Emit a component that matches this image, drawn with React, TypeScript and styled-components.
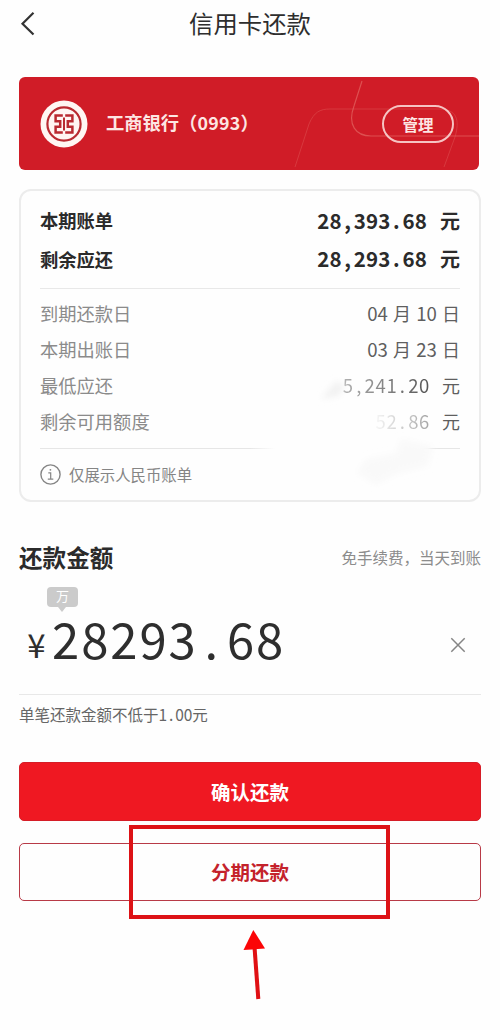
import React from "react";
import styled, { createGlobalStyle } from "styled-components";

const Global = createGlobalStyle`
  *, *::before, *::after { box-sizing: border-box; }
  body {
    margin: 0;
    background: #fefefe;
    color: #2e2e2e;
    font-family: "Noto Sans CJK SC", sans-serif;
  }
  button { font: inherit; padding: 0; margin: 0; background: none; border: 0; color: inherit; }
  svg { display: block; flex: none; }
`;

const Page = styled.main`
  width: 500px;
  height: 1030px;
  padding: 0 19px;
  display: flex;
  flex-direction: column;
  overflow: hidden;
`;

const Header = styled.header`
  height: 47px;
  display: grid;
  grid-template-columns: 60px 1fr 60px;
  align-items: center;
`;

const Title = styled.h1`
  margin: 0;
  padding-bottom: 2px;
  text-align: center;
  font-size: 24.4px;
  font-weight: 400;
  line-height: 45px;
`;

const BankCard = styled.section`
  position: relative;
  margin: 30px 2px 0 0;
  height: 93px;
  padding: 0 25px 0 21px;
  display: flex;
  align-items: center;
  border-radius: 6px;
  background: #d01c27;
  color: #fde6e3;
  overflow: hidden;
`;

const CardLines = styled.svg`
  position: absolute;
  right: 0;
  top: 0;
`;

const BankName = styled.div`
  flex: 1;
  margin-left: 18px;
  padding-bottom: 3px;
  font-size: 18.3px;
  font-weight: 700;
  line-height: 26px;
  white-space: nowrap;
`;

const ManageButton = styled.button`
  position: relative;
  width: 72px;
  height: 38px;
  border: 2px solid #f6c4c3;
  border-radius: 19px;
  font-size: 15.5px;
  font-weight: 700;
  line-height: 32px;
`;

const DigitRun = styled.span<{ $size: number; $spacing: number; $weight: number }>`
  font-size: ${(p) => p.$size}px;
  font-weight: ${(p) => p.$weight};
  letter-spacing: ${(p) => p.$spacing}px;
`;

const Mark = styled.span<{ $width: number }>`
  display: inline-block;
  width: ${(p) => p.$width}px;
  text-align: center;
`;

const BillCard = styled.section`
  position: relative;
  margin-top: 19px;
  height: 313px;
  padding: 10px 19px 0;
  border: 2px solid #ececec;
  border-radius: 12px;
`;

const Row = styled.div<{ $strong?: boolean }>`
  display: flex;
  justify-content: space-between;
  align-items: center;
  height: ${(p) => (p.$strong ? 38.5 : 36.1)}px;
  font-size: 18.3px;
  line-height: 30px;
  font-weight: ${(p) => (p.$strong ? 600 : 400)};
  color: ${(p) => (p.$strong ? "#2b2b2b" : "#8b8b8b")};
  white-space: nowrap;
`;

const Value = styled.span<{ $strong?: boolean }>`
  display: flex;
  align-items: baseline;
  gap: ${(p) => (p.$strong ? 13 : 12)}px;
  font-size: ${(p) => (p.$strong ? 20 : 18)}px;
  color: ${(p) => (p.$strong ? "#2b2b2b" : "#5f5f5f")};
`;

const DateValue = styled(Value)`
  gap: 5.3px;
`;

const Faded = styled.span<{ $from: string; $to: string }>`
  background: linear-gradient(90deg, ${(p) => p.$from}, ${(p) => p.$to});
  background-clip: text;
  -webkit-background-clip: text;
  color: transparent;
`;

const Rule = styled.hr<{ $gap?: string; $erased?: boolean }>`
  border: 0;
  flex: none;
  height: 1px;
  margin: ${(p) => p.$gap ?? "0"};
  background: ${(p) =>
    p.$erased
      ? "linear-gradient(90deg, #e6e6e6 50%, #fefefe 56%, #fefefe 90%, #e6e6e6 93%)"
      : "#e8e8e8"};
`;

const Note = styled.div`
  display: flex;
  align-items: center;
  gap: 8px;
  margin-top: 14px;
  height: 23px;
  font-size: 15.4px;
  color: #858585;
`;

const NoteText = styled.span`
  padding-bottom: 2px;
`;

const Smudge = styled.svg`
  position: absolute;
  left: 270px;
  top: 180px;
`;

const AmountHead = styled.div`
  display: flex;
  justify-content: space-between;
  align-items: center;
  margin-top: 39px;
  height: 32px;
  color: #8c8c8c;
  font-size: 15.5px;
`;

const AmountTitle = styled.h2`
  margin: 0;
  font-size: 23.6px;
  line-height: 32px;
  font-weight: 600;
  color: #2b2b2b;
`;

const UnitTag = styled.div`
  position: relative;
  width: 31px;
  height: 20px;
  margin: 14px 0 0 28px;
  border-radius: 4px;
  background: #cbcbcb;
  color: #fff;
  text-align: center;
  font-size: 13px;
  line-height: 18px;
  &::after {
    content: "";
    position: absolute;
    left: 11px;
    top: 20px;
    border: 4.5px solid transparent;
    border-top: 5px solid #cbcbcb;
    border-bottom: 0;
  }
`;

const AmountRow = styled.div`
  display: flex;
  align-items: center;
  height: 70px;
  margin-top: 3px;
  padding-right: 15px;
`;

const Amount = styled.div`
  flex: 1;
  display: flex;
  align-items: baseline;
  margin: 0 0 7px 2px;
  line-height: 60px;
`;

const Yen = styled.span`
  position: relative;
  top: -1px;
  width: 31px;
  font-size: 33px;
  text-align: center;
`;

const Minimum = styled.p`
  margin: 8px 0 0;
  height: 22px;
  font-size: 15.5px;
  line-height: 22px;
  color: #666;
`;

const Action = styled.button<{ $primary?: boolean }>`
  flex: none;
  width: 462px;
  height: ${(p) => (p.$primary ? 59 : 58)}px;
  margin-top: ${(p) => (p.$primary ? 37 : 22)}px;
  border: 1.5px solid ${(p) => (p.$primary ? "#d51d27" : "#b83a47")};
  border-radius: 5px;
  background: ${(p) => (p.$primary ? "#ef1822" : "transparent")};
  color: ${(p) => (p.$primary ? "#fff" : "#c4222b")};
  font-size: 19.5px;
  font-weight: 600;
  line-height: 54px;
`;

const Highlight = styled.div`
  position: absolute;
  left: 129px;
  top: 825px;
  width: 261px;
  height: 94px;
  border: 4px solid #dd1216;
`;

const Arrow = styled.svg`
  position: absolute;
  left: 240px;
  top: 925px;
`;

interface DigitsProps {
  children: string;
  size: number;
  pitch: number;
  weight?: number;
}

/* Fixed-pitch figures: punctuation takes a full digit cell. */
function Digits({ children, size, pitch, weight = 400 }: DigitsProps) {
  const advance = weight > 500 ? 0.59 : 0.555;
  return (
    <DigitRun $size={size} $weight={weight} $spacing={pitch - size * advance}>
      {children.split(/([.,])/).map((part, i) =>
        part === "." || part === "," ? (
          <Mark key={i} $width={pitch}>{part}</Mark>
        ) : (
          part
        )
      )}
    </DigitRun>
  );
}

function BankLogo() {
  return (
    <svg width="48" height="48" viewBox="0 0 48 48">
      <circle cx="24" cy="24" r="23.5" fill="#fff6f3" />
      <circle cx="24" cy="24" r="16.6" fill="none" stroke="#b92a31" strokeWidth="2.2" />
      <g fill="none" stroke="#b92a31" strokeWidth="2.5">
        <path d="M22.8 15.6H15.6V21.2H20.2V26.8H15.6V32.4H22.8" />
        <path d="M25.2 15.6H32.4V21.2H27.8V26.8H32.4V32.4H25.2" />
        <path d="M24 17.5V30.5" strokeWidth="2" />
      </g>
    </svg>
  );
}

export default function App() {
  return (
    <Page>
      <Global />
      <Header>
        <svg width="20" height="26" viewBox="0 0 20 26" fill="none" stroke="#333" strokeWidth="2.2">
          <path d="M14.5 1.7 3.5 12.7 14.5 23.5" />
        </svg>
        <Title>信用卡还款</Title>
      </Header>

      <BankCard>
        <CardLines width="190" height="93" viewBox="0 0 190 93" fill="none" stroke="#e2625f">
          <path d="M73 4 65 29C58 48 67 59 82 59H190" strokeWidth="1.2" opacity=".75" />
          <path d="M6 90 20 47C25 35 31 32 41 32H150C168 32 171 43 166 60L155 90" opacity=".42" />
        </CardLines>
        <BankLogo />
        <BankName>
          工商银行（<Digits size={17.8} pitch={10.8} weight={700}>0993</Digits>）
        </BankName>
        <ManageButton>管理</ManageButton>
      </BankCard>

      <BillCard>
        <Row $strong>
          本期账单
          <Value $strong><Digits size={20.5} weight={600} pitch={12.2}>28,393.68</Digits>元</Value>
        </Row>
        <Row $strong>
          剩余应还
          <Value $strong><Digits size={20.5} weight={600} pitch={12.2}>28,293.68</Digits>元</Value>
        </Row>
        <Rule $gap="10px 0 6px" />
        <Row>
          到期还款日
          <DateValue><Digits size={18.6} pitch={10.2}>04</Digits>月<Digits size={18.6} pitch={10.2}>10</Digits>日</DateValue>
        </Row>
        <Row>
          本期出账日
          <DateValue><Digits size={18.6} pitch={10.2}>03</Digits>月<Digits size={18.6} pitch={10.2}>23</Digits>日</DateValue>
        </Row>
        <Row>
          最低应还
          <Value><Faded $from="#b0b0b0" $to="#555"><Digits size={18.5} pitch={10.9}>5,241.20</Digits></Faded>元</Value>
        </Row>
        <Row>
          剩余可用额度
          <Value><Faded $from="#f6f6f6" $to="#a5a5a5"><Digits size={18.5} pitch={10.9}>52.86</Digits></Faded>元</Value>
        </Row>
        <Rule $gap="9px 0 0" $erased />
        <Note>
          <svg width="21" height="21" viewBox="0 0 21 21" fill="none" stroke="#858585">
            <circle cx="10.5" cy="10.5" r="9.6" strokeWidth="1.4" />
            <path d="M8.3 8.8H10.7V15M7.8 15.2H13.3" strokeWidth="1.2" />
            <circle cx="10.4" cy="5.8" r=".9" fill="#858585" stroke="none" />
          </svg>
          <NoteText>仅展示人民币账单</NoteText>
        </Note>
        <Smudge width="160" height="140" viewBox="0 0 160 140">
          <defs>
            <filter id="soft" x="-20%" y="-20%" width="140%" height="140%">
              <feGaussianBlur stdDeviation="3" />
            </filter>
          </defs>
          <g filter="url(#soft)">
            <path d="M30 28 45 10 54 14 48 25Z" fill="#f2f2f2" />
            <path d="M75 88 105 82 110 68 142 75 137 95 105 103 85 114 66 102Z" fill="#f9f9f9" />
          </g>
        </Smudge>
      </BillCard>

      <AmountHead>
        <AmountTitle>还款金额</AmountTitle>
        免手续费，当天到账
      </AmountHead>
      <UnitTag>万</UnitTag>
      <AmountRow>
        <Amount>
          <Yen>¥</Yen>
          <Digits size={49} pitch={29.15}>28293.68</Digits>
        </Amount>
        <svg width="16" height="16" viewBox="0 0 16 16" stroke="#858585" strokeWidth="1.5">
          <path d="M1.3 1.3 14.7 14.7M14.7 1.3 1.3 14.7" />
        </svg>
      </AmountRow>
      <Rule $gap="14px 0 0" />
      <Minimum>
        单笔还款金额不低于<Digits size={15.5} pitch={8.4}>1.00</Digits>元
      </Minimum>

      <Action $primary>确认还款</Action>
      <Action>分期还款</Action>

      <Highlight />
      <Arrow width="30" height="76" viewBox="0 0 30 76">
        <path d="M14.5 22 18.3 74" stroke="#e01014" strokeWidth="4" />
        <path d="M13.3 5 25 23.5 3.5 25Z" fill="#fb0507" />
      </Arrow>
    </Page>
  );
}
